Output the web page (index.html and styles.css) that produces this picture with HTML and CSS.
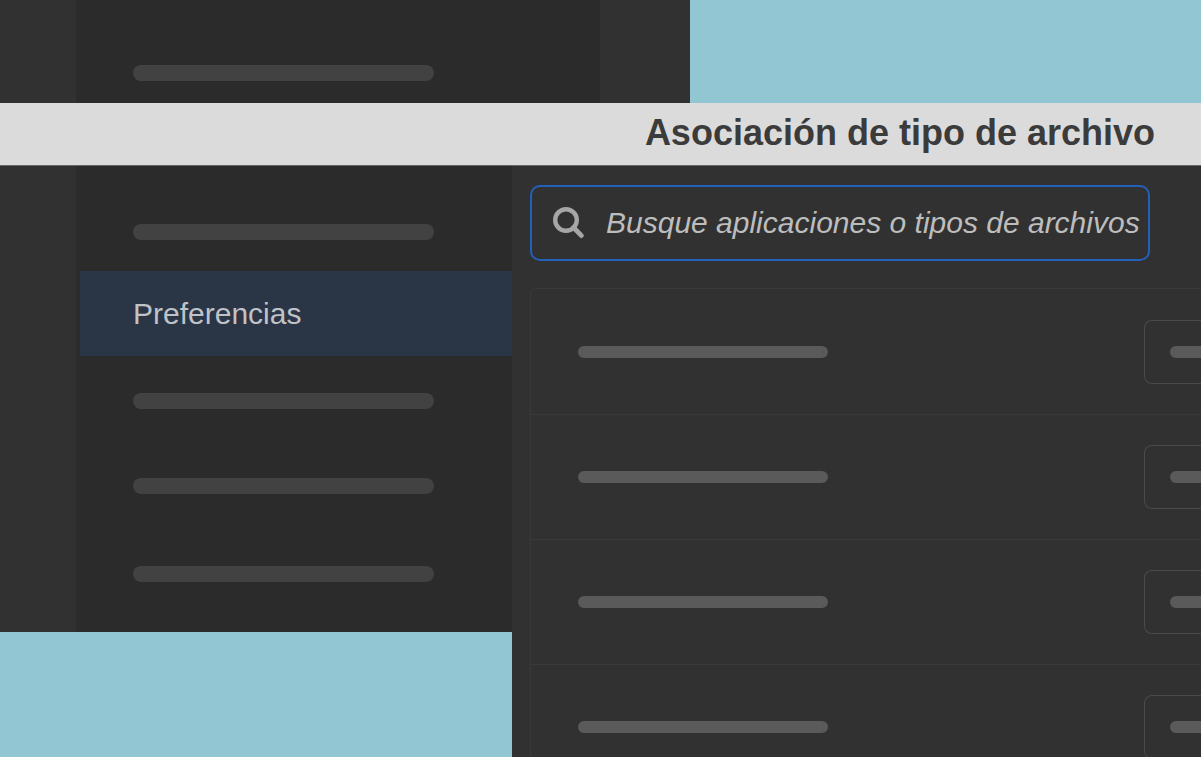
FILE: index.html
```
<!DOCTYPE html>
<html lang="es">
<head>
  <meta charset="UTF-8" />
  <title>Asociación de tipo de archivo</title>
  <meta name="viewport" content="width=device-width, initial-scale=1.0"/>
  <link rel="stylesheet" href="styles.css">
</head>
<body>

  <!-- Window top -->
  <div class="top">
    <div class="top-window">
      <div class="top-sidebar"><span class="bar"></span></div>
    </div>
  </div>

  <header class="title-bar">
    <h1>Asociación de tipo de archivo</h1>
  </header>

  <div class="content">
    <!-- Sidebar -->
    <div class="side">
      <nav class="menu">
        <div class="menu-item"><span class="bar"></span></div>
        <a class="menu-item selected" href="#preferencias">Preferencias</a>
        <div class="menu-item"><span class="bar"></span></div>
        <div class="menu-item"><span class="bar"></span></div>
        <div class="menu-item"><span class="bar"></span></div>
      </nav>
    </div>

    <!-- File types -->
    <main class="panel" id="preferencias">
      <label class="search">
        <svg class="search-icon" viewBox="0 0 32 32" aria-hidden="true">
          <circle cx="13" cy="13" r="10.8" fill="none" stroke="#a6a6a6" stroke-width="4.4"/>
          <path d="M20.5 20.5 L28.4 28.6" stroke="#a6a6a6" stroke-width="4.8" stroke-linecap="round"/>
        </svg>
        <input type="text" placeholder="Busque aplicaciones o tipos de archivos" aria-label="Busque aplicaciones o tipos de archivos">
      </label>

      <div class="list">
        <div class="row">
          <span class="bar name"></span>
          <button class="picker" aria-label="Aplicación"><span class="bar"></span></button>
        </div>
        <div class="row">
          <span class="bar name"></span>
          <button class="picker" aria-label="Aplicación"><span class="bar"></span></button>
        </div>
        <div class="row">
          <span class="bar name"></span>
          <button class="picker" aria-label="Aplicación"><span class="bar"></span></button>
        </div>
        <div class="row">
          <span class="bar name"></span>
          <button class="picker" aria-label="Aplicación"><span class="bar"></span></button>
        </div>
      </div>
    </main>
  </div>

</body>
</html>
```
FILE: styles.css
```
* {
  box-sizing: border-box;
}

body {
  margin: 0;
  height: 100vh;
  display: flex;
  flex-direction: column;
  overflow: hidden;
  font-family: "Liberation Sans", Arial, sans-serif;
  font-size: 30px;
  background: #93c6d3;
}

.bar {
  display: block;
  width: 301px;
  height: 16px;
  border-radius: 8px;
  background: #424242;
}

/* Window top */
.top {
  flex: none;
}

.top-window {
  width: 690px;
  padding: 0 90px 0 76px;
  background: #313131;
}

.top-sidebar {
  padding: 65px 57px 22px;
  background: #2b2b2b;
}

.title-bar {
  flex: none;
  padding: 9px 46px 12px;
  background: #dbdbdb;
  border-bottom: 1px solid #666;
}

.title-bar h1 {
  margin: 0;
  font-size: 36px;
  line-height: 41px;
  text-align: right;
  color: #3b3b3b;
}

.content {
  flex: 1;
  min-height: 0;
  display: flex;
}

/* Sidebar */
.side {
  flex: none;
  width: 512px;
  align-self: flex-start;
  padding-left: 76px;
  background: #313131;
}

.menu {
  display: grid;
  grid-template-rows: 78px 85px 90px 80px 96px;
  padding: 27px 0 10px 4px;
  background: #2b2b2b;
}

.menu-item {
  display: flex;
  align-items: center;
  padding-left: 53px;
}

.menu-item.selected {
  color: #bfc3c8;
  background: #2a3545;
  text-decoration: none;
}

/* File types */
.panel {
  flex: 1;
  min-width: 0;
  padding: 19px 0 0 18px;
  background: #313131;
}

.search {
  display: flex;
  align-items: center;
  gap: 21px;
  height: 76px;
  margin: 0 51px 27px 0;
  padding-left: 21px;
  border: 2px solid #2360b8;
  border-radius: 10px;
}

.search-icon {
  flex: none;
  width: 32px;
  height: 32px;
}

.search input {
  flex: 1;
  min-width: 0;
  padding: 0;
  border: 0;
  outline: 0;
  font: italic 30px "Liberation Sans", Arial, sans-serif;
  color: #bdbdbd;
  background: none;
}

.search input::placeholder {
  color: #bdbdbd;
  opacity: 1;
}

.list {
  border: 1px solid #393939;
  border-right: 0;
  border-radius: 6px 0 0 0;
}

.row {
  display: flex;
  align-items: center;
  justify-content: space-between;
  height: 125px;
  padding-left: 47px;
}

.row + .row {
  border-top: 1px solid #393939;
}

.row .bar {
  height: 12px;
  background: #5a5a5a;
}

.row .name {
  width: 250px;
}

/* runs off the right edge of the window */
.picker {
  display: flex;
  align-items: center;
  width: 57px;
  height: 64px;
  padding: 0 0 0 25px;
  border: 1px solid #4a4a4a;
  border-right: 0;
  border-radius: 8px 0 0 8px;
  background: none;
}

.picker .bar {
  width: 100%;
  border-radius: 6px 0 0 6px;
}
```
